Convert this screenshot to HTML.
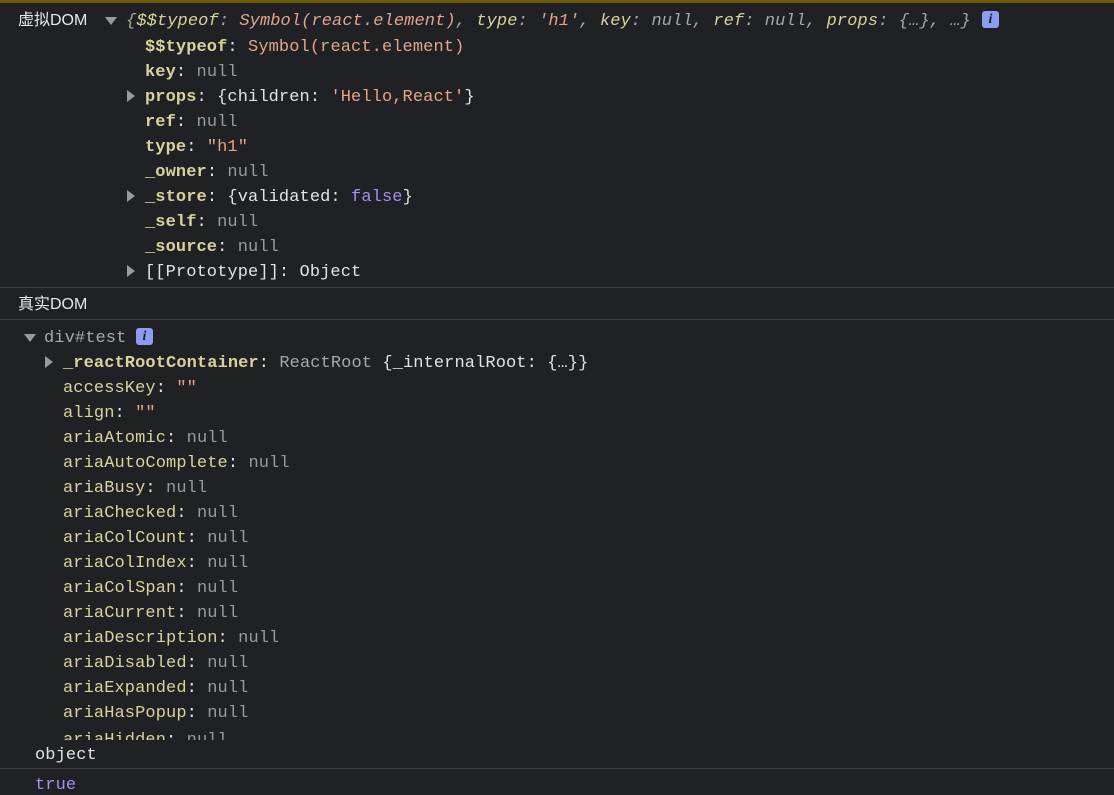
<!DOCTYPE html>
<html><head><meta charset="utf-8"><style>
html,body{margin:0;padding:0;background:#202124;width:1114px;height:795px;overflow:hidden}
body{position:relative;font-family:"Liberation Mono",monospace;font-size:17px;color:#e3e3e3;letter-spacing:0.1px}
.r{position:absolute;white-space:pre;height:25px;line-height:25px}
.k{color:#d9d39b;font-weight:bold}
.kn{color:#d9d39b}
.s{color:#e0a58a}
.n{color:#9a9a9a}
.p{color:#a58ff0}
.g{color:#a8a8a8}
.w{color:#e3e3e3}
.i{font-style:italic}
.cn{font-family:"Liberation Sans","Noto Sans CJK SC",sans-serif;font-size:16px;color:#e8e8e8;letter-spacing:0}
.tri{position:absolute;width:0;height:0}
.td{border-left:6px solid transparent;border-right:6px solid transparent;border-top:8px solid #9a9a9a}
.tr{border-top:6px solid transparent;border-bottom:6px solid transparent;border-left:8px solid #9a9a9a}
.sep{position:absolute;left:0;width:1114px;height:1px;background:#3c3c3e}
.info{position:absolute;width:17px;height:17px;border-radius:3px;background:#8c9cf5;color:#202124;font:bold italic 14px "Liberation Serif",serif;text-align:center;line-height:17px}
</style></head><body>
<div style="position:absolute;left:0;top:0;width:1114px;height:3px;background:#6b5a00"></div>
<div class="r cn" style="left:18px;top:8px">虚拟DOM</div>
<div class="tri td" style="left:105px;top:17px"></div>
<div class="r i" style="left:126px;top:9px"><span class="g">{</span><span class="kn">$$typeof</span><span class="g">: </span><span class="s">Symbol(react.element)</span><span class="g">, </span><span class="kn">type</span><span class="g">: </span><span class="s">'h1'</span><span class="g">, </span><span class="kn">key</span><span class="g">: null, </span><span class="kn">ref</span><span class="g">: null, </span><span class="kn">props</span><span class="g">: {…}, …}</span></div>
<div class="info" style="left:982px;top:11px">i</div>
<div class="r" style="left:145px;top:35px"><span class="k">$$typeof</span><span class="w">: </span><span class="s">Symbol(react.element)</span></div>
<div class="r" style="left:145px;top:60px"><span class="k">key</span><span class="w">: </span><span class="n">null</span></div>
<div class="tri tr" style="left:127px;top:90px"></div>
<div class="r" style="left:145px;top:85px"><span class="k">props</span><span class="w">: {children: </span><span class="s">'Hello,React'</span><span class="w">}</span></div>
<div class="r" style="left:145px;top:110px"><span class="k">ref</span><span class="w">: </span><span class="n">null</span></div>
<div class="r" style="left:145px;top:135px"><span class="k">type</span><span class="w">: </span><span class="s">"h1"</span></div>
<div class="r" style="left:145px;top:160px"><span class="k">_owner</span><span class="w">: </span><span class="n">null</span></div>
<div class="tri tr" style="left:127px;top:190px"></div>
<div class="r" style="left:145px;top:185px"><span class="k">_store</span><span class="w">: {validated: </span><span class="p">false</span><span class="w">}</span></div>
<div class="r" style="left:145px;top:210px"><span class="k">_self</span><span class="w">: </span><span class="n">null</span></div>
<div class="r" style="left:145px;top:235px"><span class="k">_source</span><span class="w">: </span><span class="n">null</span></div>
<div class="tri tr" style="left:127px;top:265px"></div>
<div class="r" style="left:145px;top:260px"><span class="w">[[Prototype]]: Object</span></div>
<div class="sep" style="top:287px"></div>
<div class="r cn" style="left:18px;top:292px">真实DOM</div>
<div class="sep" style="top:319px"></div>
<div class="tri td" style="left:24px;top:334px"></div>
<div class="r g" style="left:44px;top:326px">div#test</div>
<div class="info" style="left:136px;top:328px">i</div>
<div class="tri tr" style="left:45px;top:356px"></div>
<div class="r" style="left:63px;top:351px"><span class="k">_reactRootContainer</span><span class="w">: </span><span class="g">ReactRoot </span><span class="w">{_internalRoot: {…}}</span></div>
<div style="position:absolute;left:0;top:376px;width:1114px;height:364px;overflow:hidden">
<div class="r" style="left:63px;top:0px"><span class="kn">accessKey</span><span class="w">: </span><span class="s">""</span></div>
<div class="r" style="left:63px;top:25px"><span class="kn">align</span><span class="w">: </span><span class="s">""</span></div>
<div class="r" style="left:63px;top:50px"><span class="kn">ariaAtomic</span><span class="w">: </span><span class="n">null</span></div>
<div class="r" style="left:63px;top:75px"><span class="kn">ariaAutoComplete</span><span class="w">: </span><span class="n">null</span></div>
<div class="r" style="left:63px;top:100px"><span class="kn">ariaBusy</span><span class="w">: </span><span class="n">null</span></div>
<div class="r" style="left:63px;top:125px"><span class="kn">ariaChecked</span><span class="w">: </span><span class="n">null</span></div>
<div class="r" style="left:63px;top:150px"><span class="kn">ariaColCount</span><span class="w">: </span><span class="n">null</span></div>
<div class="r" style="left:63px;top:175px"><span class="kn">ariaColIndex</span><span class="w">: </span><span class="n">null</span></div>
<div class="r" style="left:63px;top:200px"><span class="kn">ariaColSpan</span><span class="w">: </span><span class="n">null</span></div>
<div class="r" style="left:63px;top:225px"><span class="kn">ariaCurrent</span><span class="w">: </span><span class="n">null</span></div>
<div class="r" style="left:63px;top:250px"><span class="kn">ariaDescription</span><span class="w">: </span><span class="n">null</span></div>
<div class="r" style="left:63px;top:275px"><span class="kn">ariaDisabled</span><span class="w">: </span><span class="n">null</span></div>
<div class="r" style="left:63px;top:300px"><span class="kn">ariaExpanded</span><span class="w">: </span><span class="n">null</span></div>
<div class="r" style="left:63px;top:325px"><span class="kn">ariaHasPopup</span><span class="w">: </span><span class="n">null</span></div>
<div class="r" style="left:63px;top:352px"><span class="kn">ariaHidden</span><span class="w">: </span><span class="n">null</span></div>
</div>
<div class="r w" style="left:35px;top:743px">object</div>
<div class="sep" style="top:768px"></div>
<div class="r p" style="left:35px;top:773px">true</div>
</body></html>
